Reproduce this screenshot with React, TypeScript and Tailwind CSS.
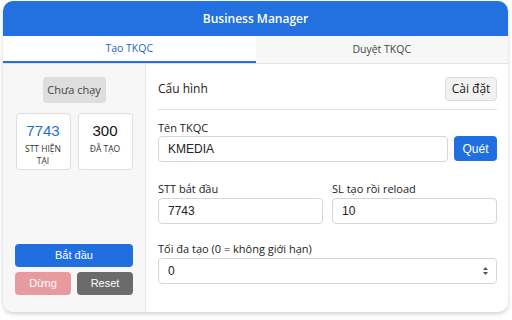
import React from "react";

const ui = { fontFamily: '"Open Sans", "Noto Sans", sans-serif' };
const arial = { fontFamily: '"Liberation Sans", Arial, sans-serif' };

const Field = ({ value, className = "" }: { value: string; className?: string }) => (
  <div
    className={`flex h-[26px] items-center rounded-[4px] border border-[#d6d6d6] bg-white px-[9px] text-[12px] text-[#222] ${className}`}
    style={arial}
  >
    {value}
  </div>
);

export default function App() {
  return (
    <div className="h-[320px] w-[512px] overflow-hidden bg-white pl-[3px] pt-[1px]" style={ui}>
      <div className="flex h-[311px] w-[505px] flex-col overflow-hidden rounded-[10px] bg-white shadow-[0_2px_4px_rgba(0,0,0,0.18)]">
        {/* header */}
        <div className="flex h-[35px] items-center justify-center bg-[#2370e0] text-[12px] font-semibold text-white">
          Business Manager
        </div>

        {/* tabs */}
        <div className="flex h-[28px] border-b border-[#e3e3e3] text-[10.5px]">
          <div className="flex flex-1 items-center justify-center border-b-2 border-[#2370e0] bg-white text-[#2a63c4]">
            Tạo TKQC
          </div>
          <div className="flex flex-1 items-center justify-center bg-[#f7f7f7] text-[#444]">Duyệt TKQC</div>
        </div>

        {/* body */}
        <div className="flex flex-1">
          {/* left column */}
          <div className="flex w-[143px] flex-col items-center border-r border-[#e4e4e4] bg-[#f7f7f7] px-[12px] pb-[17px] pt-[13px]">
            <div className="flex h-[26px] w-[63px] items-center justify-center rounded-[4px] bg-[#dedede] text-[11px] text-[#444]">
              Chưa chạy
            </div>
            <div className="mt-[10px] flex gap-[7px]">
              <div className="flex h-[57px] w-[55px] flex-col items-center rounded-[4px] border border-[#dedede] bg-white pt-[8px]">
                <div className="text-[15px] leading-[18px] text-[#1a6fe0]" style={arial}>7743</div>
                <div className="mt-[3px] text-center text-[8.5px] leading-[12px] text-[#333]">
                  STT HIỆN
                  <br />
                  TẠI
                </div>
              </div>
              <div className="flex h-[57px] w-[55px] flex-col items-center rounded-[4px] border border-[#dedede] bg-white pt-[8px]">
                <div className="text-[15px] leading-[18px] text-[#111]" style={arial}>300</div>
                <div className="mt-[3px] text-center text-[8.5px] leading-[12px] text-[#333]">ĐÃ TẠO</div>
              </div>
            </div>

            <div className="mt-auto flex w-full flex-col gap-[5px] text-[11px]" style={arial}>
              <div className="flex h-[23px] items-center justify-center rounded-[4px] bg-[#1f6fe0] text-white">
                Bắt đầu
              </div>
              <div className="flex gap-[6px]">
                <div className="flex h-[23px] flex-1 items-center justify-center rounded-[4px] bg-[#e89b9e] text-white">
                  Dừng
                </div>
                <div className="flex h-[23px] flex-1 items-center justify-center rounded-[4px] bg-[#6b6b6b] text-white">
                  Reset
                </div>
              </div>
            </div>
          </div>

          {/* right column */}
          <div className="flex flex-1 flex-col pl-[12px] pr-[11px] pt-[13px] text-[11px] text-[#222]">
            <div className="flex h-[24px] items-center justify-between">
              <span className="text-[12px]">Cấu hình</span>
              <div className="flex h-[24px] w-[52px] items-center justify-center rounded-[4px] border border-[#dcdcdc] bg-[#f2f2f2] text-[12px]">
                Cài đặt
              </div>
            </div>
            <div className="mt-[8px] border-t border-[#e2e2e2]" />

            <div className="mt-[11px] leading-[14px]">Tên TKQC</div>
            <div className="mt-[1px] flex gap-[6px]">
              <Field value="KMEDIA" className="h-[25px] flex-1" />
              <div
                className="flex h-[25px] w-[43px] items-center justify-center rounded-[4px] bg-[#1f6fe0] text-[12px] text-white"
                style={arial}
              >
                Quét
              </div>
            </div>

            <div className="mt-[20px] flex gap-[9px]">
              <div className="flex flex-1 flex-col">
                <div className="leading-[14px]">STT bắt đầu</div>
                <Field value="7743" className="mt-[2px]" />
              </div>
              <div className="flex flex-1 flex-col">
                <div className="leading-[14px]">SL tạo rồi reload</div>
                <Field value="10" className="mt-[2px]" />
              </div>
            </div>

            <div className="mt-[18px] leading-[14px]">Tối đa tạo (0 = không giới hạn)</div>
            <div className="relative mt-[2px]">
              <Field value="0" />
              <svg className="absolute right-[8px] top-[8px]" width="7" height="10" viewBox="0 0 7 10">
                <path d="M3.5 1 L6 4 H1 Z" fill="#555" />
                <path d="M3.5 9 L6 6 H1 Z" fill="#555" />
              </svg>
            </div>
          </div>
        </div>
      </div>
    </div>
  );
}
